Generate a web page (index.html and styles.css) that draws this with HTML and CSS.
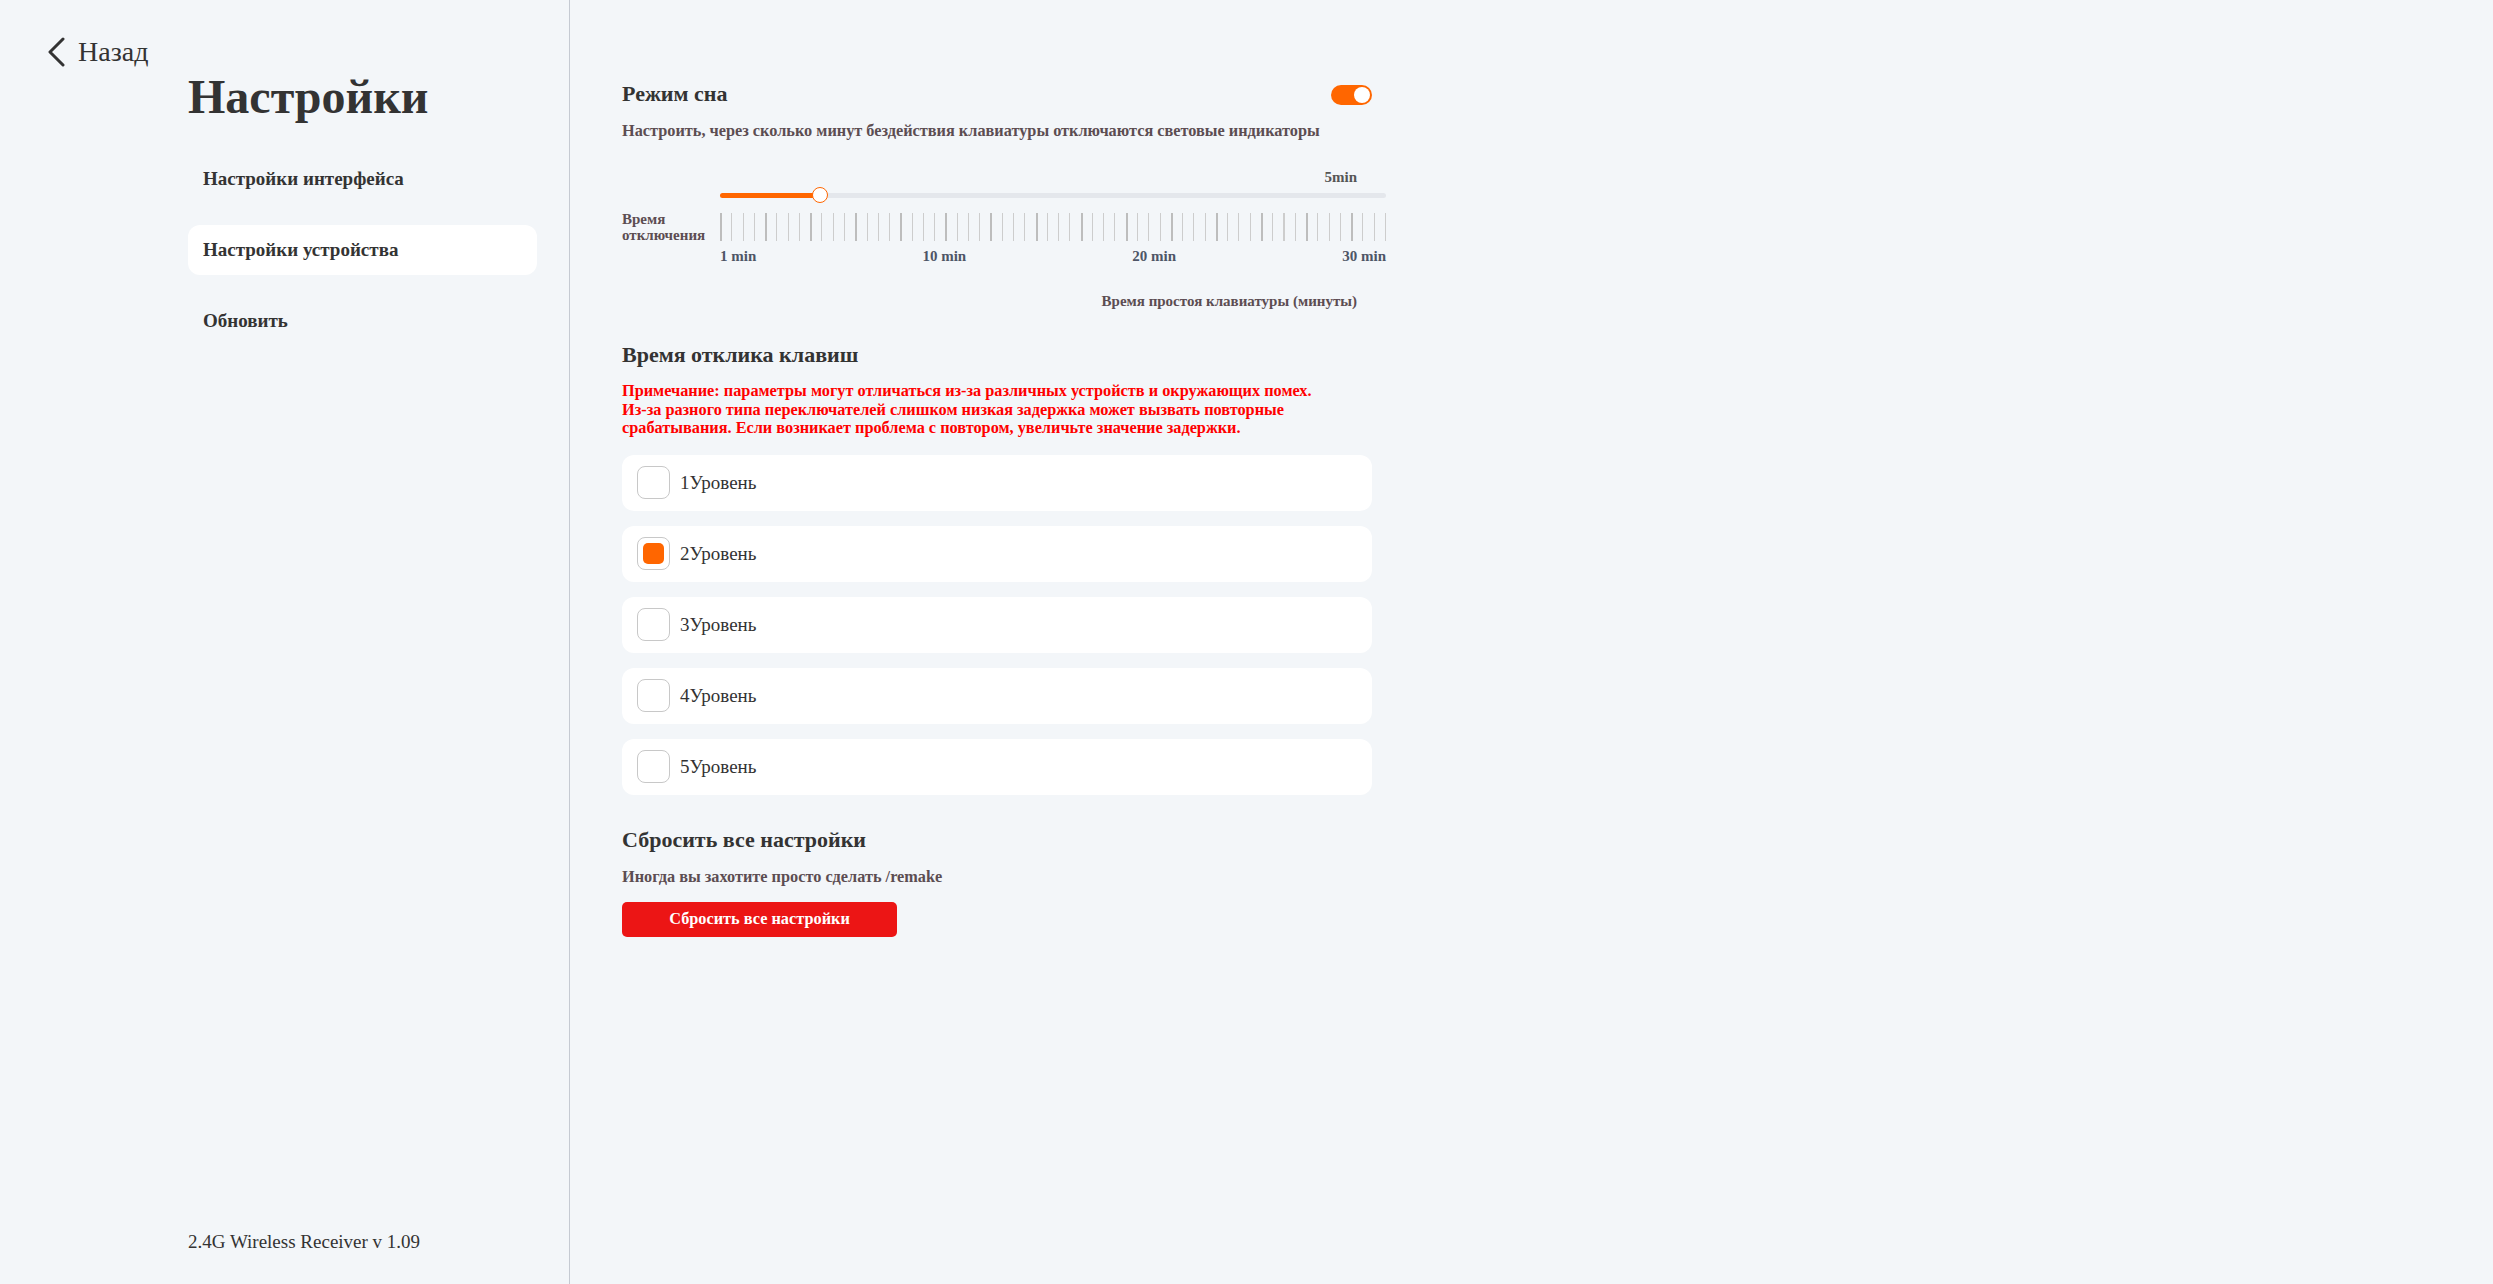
FILE: index.html
```html
<!DOCTYPE html>
<html lang="ru">
<head>
    <meta charset="UTF-8">
    <meta name="viewport" content="width=device-width, initial-scale=1.0">
    <title>Настройки</title>
    <link rel="stylesheet" href="styles.css">
</head>
<body>
    <aside class="sidebar">
        <a class="back" href="#">
            <svg width="20" height="30" viewBox="0 0 20 30">
                <polyline points="17,2 4,15 17,28" fill="none" stroke="#333" stroke-width="3" stroke-linecap="round" stroke-linejoin="round"/>
            </svg>
            <span>Назад</span>
        </a>
        <div class="nav">
            <h1 class="title">Настройки</h1>
            <div class="menu">
                <div class="menu-item">Настройки интерфейса</div>
                <div class="menu-item active">Настройки устройства</div>
                <div class="menu-item">Обновить</div>
            </div>
        </div>
        <div class="version">2.4G Wireless Receiver v 1.09</div>
    </aside>

    <main class="main">
        <div class="content">
            <section class="sleep">
                <div class="section-head">
                    <h2>Режим сна</h2>
                    <div class="toggle on"><span class="toggle-knob"></span></div>
                </div>
                <p class="hint">Настроить, через сколько минут бездействия клавиатуры отключаются световые индикаторы</p>

                <div class="slider-value">5min</div>
                <div class="slider">
                    <div class="slider-label">Время<br>отключения</div>
                    <div class="slider-body">
                        <div class="track">
                            <div class="track-fill" style="width: 15%"></div>
                            <div class="track-knob" style="left: 15%"></div>
                        </div>
                        <div class="ticks"></div>
                        <div class="tick-labels">
                            <span>1 min</span>
                            <span>10 min</span>
                            <span>20 min</span>
                            <span>30 min</span>
                        </div>
                    </div>
                </div>
                <div class="axis-caption">Время простоя клавиатуры (минуты)</div>
            </section>

            <section class="response">
                <h2>Время отклика клавиш</h2>
                <p class="warning">
                    Примечание: параметры могут отличаться из-за различных устройств и окружающих помех.<br>
                    Из-за разного типа переключателей слишком низкая задержка может вызвать повторные<br>
                    срабатывания. Если возникает проблема с повтором, увеличьте значение задержки.
                </p>
                <div class="levels">
                    <label class="level"><span class="check"></span>1Уровень</label>
                    <label class="level"><span class="check checked"></span>2Уровень</label>
                    <label class="level"><span class="check"></span>3Уровень</label>
                    <label class="level"><span class="check"></span>4Уровень</label>
                    <label class="level"><span class="check"></span>5Уровень</label>
                </div>
            </section>

            <section class="reset">
                <h2>Сбросить все настройки</h2>
                <p class="hint">Иногда вы захотите просто сделать /remake</p>
                <button class="reset-btn">Сбросить все настройки</button>
            </section>
        </div>
    </main>
</body>
</html>
```

FILE: styles.css
```css
html, body {
    margin: 0;
    height: 100%;
}
body {
    display: flex;
    font-family: "Liberation Serif", "Times New Roman", serif;
    color: #333;
    background-color: #f3f6f9;
}
h1, h2, p {
    margin: 0;
}

/* left column */
.sidebar {
    width: 570px;
    flex: none;
    height: 100vh;
    box-sizing: border-box;
    display: flex;
    flex-direction: column;
    padding: 36px 0 31px;
    border-right: 1px solid #c5cad2;
}
.back {
    display: flex;
    align-items: center;
    gap: 12px;
    margin-left: 46px;
    font-size: 28px;
    line-height: 32px;
    color: #333;
    text-decoration: none;
}
.back svg {
    display: block;
}
.nav {
    padding: 0 32px 0 188px;
}
.title {
    font-size: 48px;
    line-height: 56px;
    margin: 1px 0 29px;
}
.menu {
    display: flex;
    flex-direction: column;
    gap: 21px;
}
.menu-item {
    height: 50px;
    line-height: 50px;
    padding-left: 15px;
    border-radius: 12px;
    font-size: 19px;
    font-weight: bold;
}
.menu-item.active {
    background-color: #fff;
}
.version {
    margin-top: auto;
    padding-left: 188px;
    font-size: 19px;
    line-height: 22px;
}

/* right column */
.main {
    flex: 1;
    padding: 81px 0 0 52px;
}
.content {
    width: 750px;
}
h2 {
    font-size: 22px;
    line-height: 26px;
    font-weight: bold;
    color: #333;
}
.hint {
    font-size: 16.3px;
    line-height: 18px;
    font-weight: bold;
    color: #5c4d52;
}
.section-head {
    display: flex;
    justify-content: space-between;
    align-items: center;
}
.toggle {
    width: 41px;
    height: 20px;
    border-radius: 10px;
    background-color: #ccc;
    position: relative;
    margin-top: 2px;
}
.toggle.on {
    background-color: #ff6600;
}
.toggle-knob {
    position: absolute;
    top: 2px;
    right: 2px;
    width: 16px;
    height: 16px;
    border-radius: 50%;
    background-color: #fff;
}
.sleep .hint {
    margin-top: 15px;
}
.slider-value {
    margin-top: 29px;
    padding-right: 15px;
    text-align: right;
    font-size: 15px;
    line-height: 17px;
    font-weight: bold;
    color: #555;
}
.slider {
    display: flex;
}
.slider-label {
    width: 98px;
    flex: none;
    margin-top: 25px;
    font-size: 15px;
    line-height: 16px;
    font-weight: bold;
    color: #5c4d52;
}
.slider-body {
    width: 666px;
    flex: none;
}
.track {
    position: relative;
    height: 16px;
    margin-top: 1px;
}
.track::before {
    content: "";
    position: absolute;
    left: 0;
    right: 0;
    top: 6px;
    height: 5px;
    border-radius: 3px;
    background-color: #e4e7ec;
}
.track-fill {
    position: absolute;
    left: 0;
    top: 6px;
    height: 5px;
    border-radius: 3px;
    background-color: #ff6600;
}
.track-knob {
    position: absolute;
    top: 0;
    width: 16px;
    height: 16px;
    box-sizing: border-box;
    margin-left: -8px;
    border: 1.5px solid #ff6600;
    border-radius: 50%;
    background-color: #fff;
}
.ticks {
    height: 28px;
    margin-top: 10px;
    background:
        repeating-linear-gradient(to right, #bdbdbd 0 2px, transparent 2px 45.08px),
        repeating-linear-gradient(to right, #cdcdcd 0 1px, transparent 1px 11.27px);
}
.tick-labels {
    display: flex;
    justify-content: space-between;
    margin-top: 6px;
    font-size: 15px;
    line-height: 18px;
    font-weight: bold;
    color: #4e5566;
}
.axis-caption {
    margin-top: 27px;
    padding-right: 15px;
    text-align: right;
    font-size: 15px;
    line-height: 18px;
    font-weight: bold;
    color: #5c4d52;
}

.response {
    margin-top: 32px;
}
.warning {
    margin-top: 14px;
    font-size: 16.3px;
    line-height: 18.5px;
    font-weight: bold;
    color: #ff0000;
}
.levels {
    display: flex;
    flex-direction: column;
    gap: 15px;
    margin-top: 17px;
}
.level {
    display: flex;
    align-items: center;
    gap: 10px;
    height: 56px;
    padding: 0 15px;
    border-radius: 12px;
    background-color: #fff;
    font-size: 19px;
    color: #333;
}
.check {
    width: 33px;
    height: 33px;
    box-sizing: border-box;
    border: 1px solid #c8c8c8;
    border-radius: 8px;
    padding: 5px;
}
.check.checked::after {
    content: "";
    display: block;
    width: 100%;
    height: 100%;
    border-radius: 5px;
    background-color: #ff6600;
}

.reset {
    margin-top: 32px;
}
.reset .hint {
    margin-top: 15px;
}
.reset-btn {
    display: block;
    width: 275px;
    height: 35px;
    margin-top: 16px;
    border: none;
    border-radius: 5px;
    background-color: #ec1515;
    color: #fff;
    font-family: inherit;
    font-size: 16.3px;
    font-weight: bold;
    cursor: pointer;
}
```
